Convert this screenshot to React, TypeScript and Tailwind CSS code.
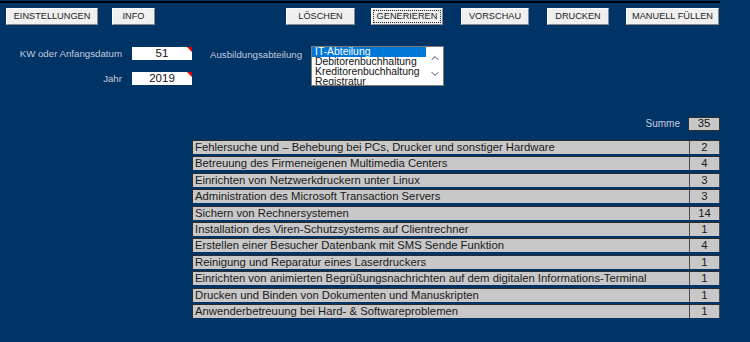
import React from 'react';
import { ChevronUp, ChevronDown } from 'lucide-react';

const BUTTONS = [
  { label: 'EINSTELLUNGEN', cls: 'ml-[6px] w-[92px]' },
  { label: 'INFO', cls: 'ml-[14px] w-[43px]' },
  { label: 'LÖSCHEN', cls: 'ml-[131px] w-[69px]' },
  { label: 'GENERIEREN', cls: 'ml-[16px] w-[72px]', focus: true },
  { label: 'VORSCHAU', cls: 'ml-[18px] w-[68px]' },
  { label: 'DRUCKEN', cls: 'ml-[18px] w-[62px]' },
  { label: 'MANUELL FÜLLEN', cls: 'ml-[17px] w-[93px]' },
];

const ROWS: [string, number][] = [
  ['Fehlersuche und – Behebung bei PCs, Drucker und sonstiger Hardware', 2],
  ['Betreuung des Firmeneigenen Multimedia Centers', 4],
  ['Einrichten von Netzwerkdruckern unter Linux', 3],
  ['Administration des Microsoft Transaction Servers', 3],
  ['Sichern von Rechnersystemen', 14],
  ['Installation des Viren-Schutzsystems auf Clientrechner', 1],
  ['Erstellen einer Besucher Datenbank mit SMS Sende Funktion', 4],
  ['Reinigung und Reparatur eines Laserdruckers', 1],
  ['Einrichten von animierten Begrüßungsnachrichten auf dem digitalen Informations-Terminal', 1],
  ['Drucken und Binden von Dokumenten und Manuskripten', 1],
  ['Anwenderbetreuung bei Hard- & Softwareproblemen', 1],
];

const DEPARTMENTS = ['IT-Abteilung', 'Debitorenbuchhaltung', 'Kreditorenbuchhaltung', 'Registratur'];

const Field = ({ value }: { value: string }) => (
  <div className="relative ml-[10px] w-[60px] h-[13px] bg-white flex items-center justify-center text-[11.5px] text-[#111] leading-none">
    {value}
    <span className="absolute top-0 right-0 w-0 h-0 border-t-[5px] border-l-[5px] border-t-[#e00000] border-l-transparent" />
  </div>
);

export default function App() {
  return (
    <div className="w-[750px] h-[342px] bg-[#003366] overflow-hidden font-['Liberation_Sans',Arial,sans-serif]">
      {/* top rule */}
      <div className="mt-[1px] h-[2px] w-[720px] bg-black" />

      {/* toolbar */}
      <div className="flex mt-[5px]">
        {BUTTONS.map((b) => (
          <button
            key={b.label}
            className={`${b.cls} h-[17px] bg-[#f0f0f0] border border-t-[#fdfdfd] border-l-[#fdfdfd] border-r-[#8a8a8a] border-b-[#8a8a8a] text-[9.2px] text-[#222] flex items-center justify-center`}
          >
            <span
              className={
                b.focus
                  ? 'px-[3px] h-[13px] flex items-center border border-dotted border-[#222]'
                  : ''
              }
            >
              {b.label}
            </span>
          </button>
        ))}
      </div>

      {/* form */}
      <div className="flex mt-[21px] h-[40px]">
        <div className="w-[192px] flex flex-col text-[9.7px] leading-none text-[#c4ccdc]">
          <div className="flex items-center justify-end mt-[1px] h-[13px]">
            KW oder Anfangsdatum
            <Field value="51" />
          </div>
          <div className="flex items-center justify-end mt-[12px] h-[13px]">
            Jahr
            <Field value="2019" />
          </div>
        </div>
        <div className="ml-[18px] w-[92px] mt-[2px] h-[13px] flex items-center text-[9.7px] leading-none text-[#c4ccdc] whitespace-nowrap">
          Ausbildungsabteilung
        </div>
        <div className="ml-[9px] w-[133px] h-[40px] bg-white border border-[#7a7a7a] flex overflow-hidden">
          <div className="flex-1 flex flex-col">
            {DEPARTMENTS.map((d, i) => (
              <div
                key={d}
                className={`h-[10px] shrink-0 leading-[10px] text-[10.4px] pl-[3px] ${
                  i === 0 ? 'bg-[#0078d7] text-white' : 'text-[#111]'
                }`}
              >
                {d}
              </div>
            ))}
          </div>
          <div className="w-[17px] flex flex-col items-center justify-between py-[5px] text-[#444]">
            <ChevronUp size={12} strokeWidth={2} />
            <ChevronDown size={12} strokeWidth={2} />
          </div>
        </div>
      </div>

      {/* summe */}
      <div className="flex justify-end items-center w-[720px] mt-[30px]">
        <span className="text-[10px] text-[#c4ccdc] mr-[8px]">Summe</span>
        <div className="w-[32px] h-[14px] bg-[#c8c8c8] border border-[#303030] flex items-center justify-center text-[11.3px] text-[#111]">
          35
        </div>
      </div>

      {/* table */}
      <div className="ml-[192px] mt-[9px] w-[528px] flex flex-col gap-[2.4px]">
        {ROWS.map(([text, n]) => (
          <div key={text} className="flex h-[14px] bg-[#c8c8c8] border-t border-l border-[#2c2c2c] text-[11.3px] text-[#1a1a1a]">
            <div className="flex-1 flex items-center pl-[2px] whitespace-nowrap overflow-hidden">{text}</div>
            <div className="w-[31px] border-l border-r border-[#4a4a4a] flex items-center justify-center">{n}</div>
          </div>
        ))}
      </div>
    </div>
  );
}
